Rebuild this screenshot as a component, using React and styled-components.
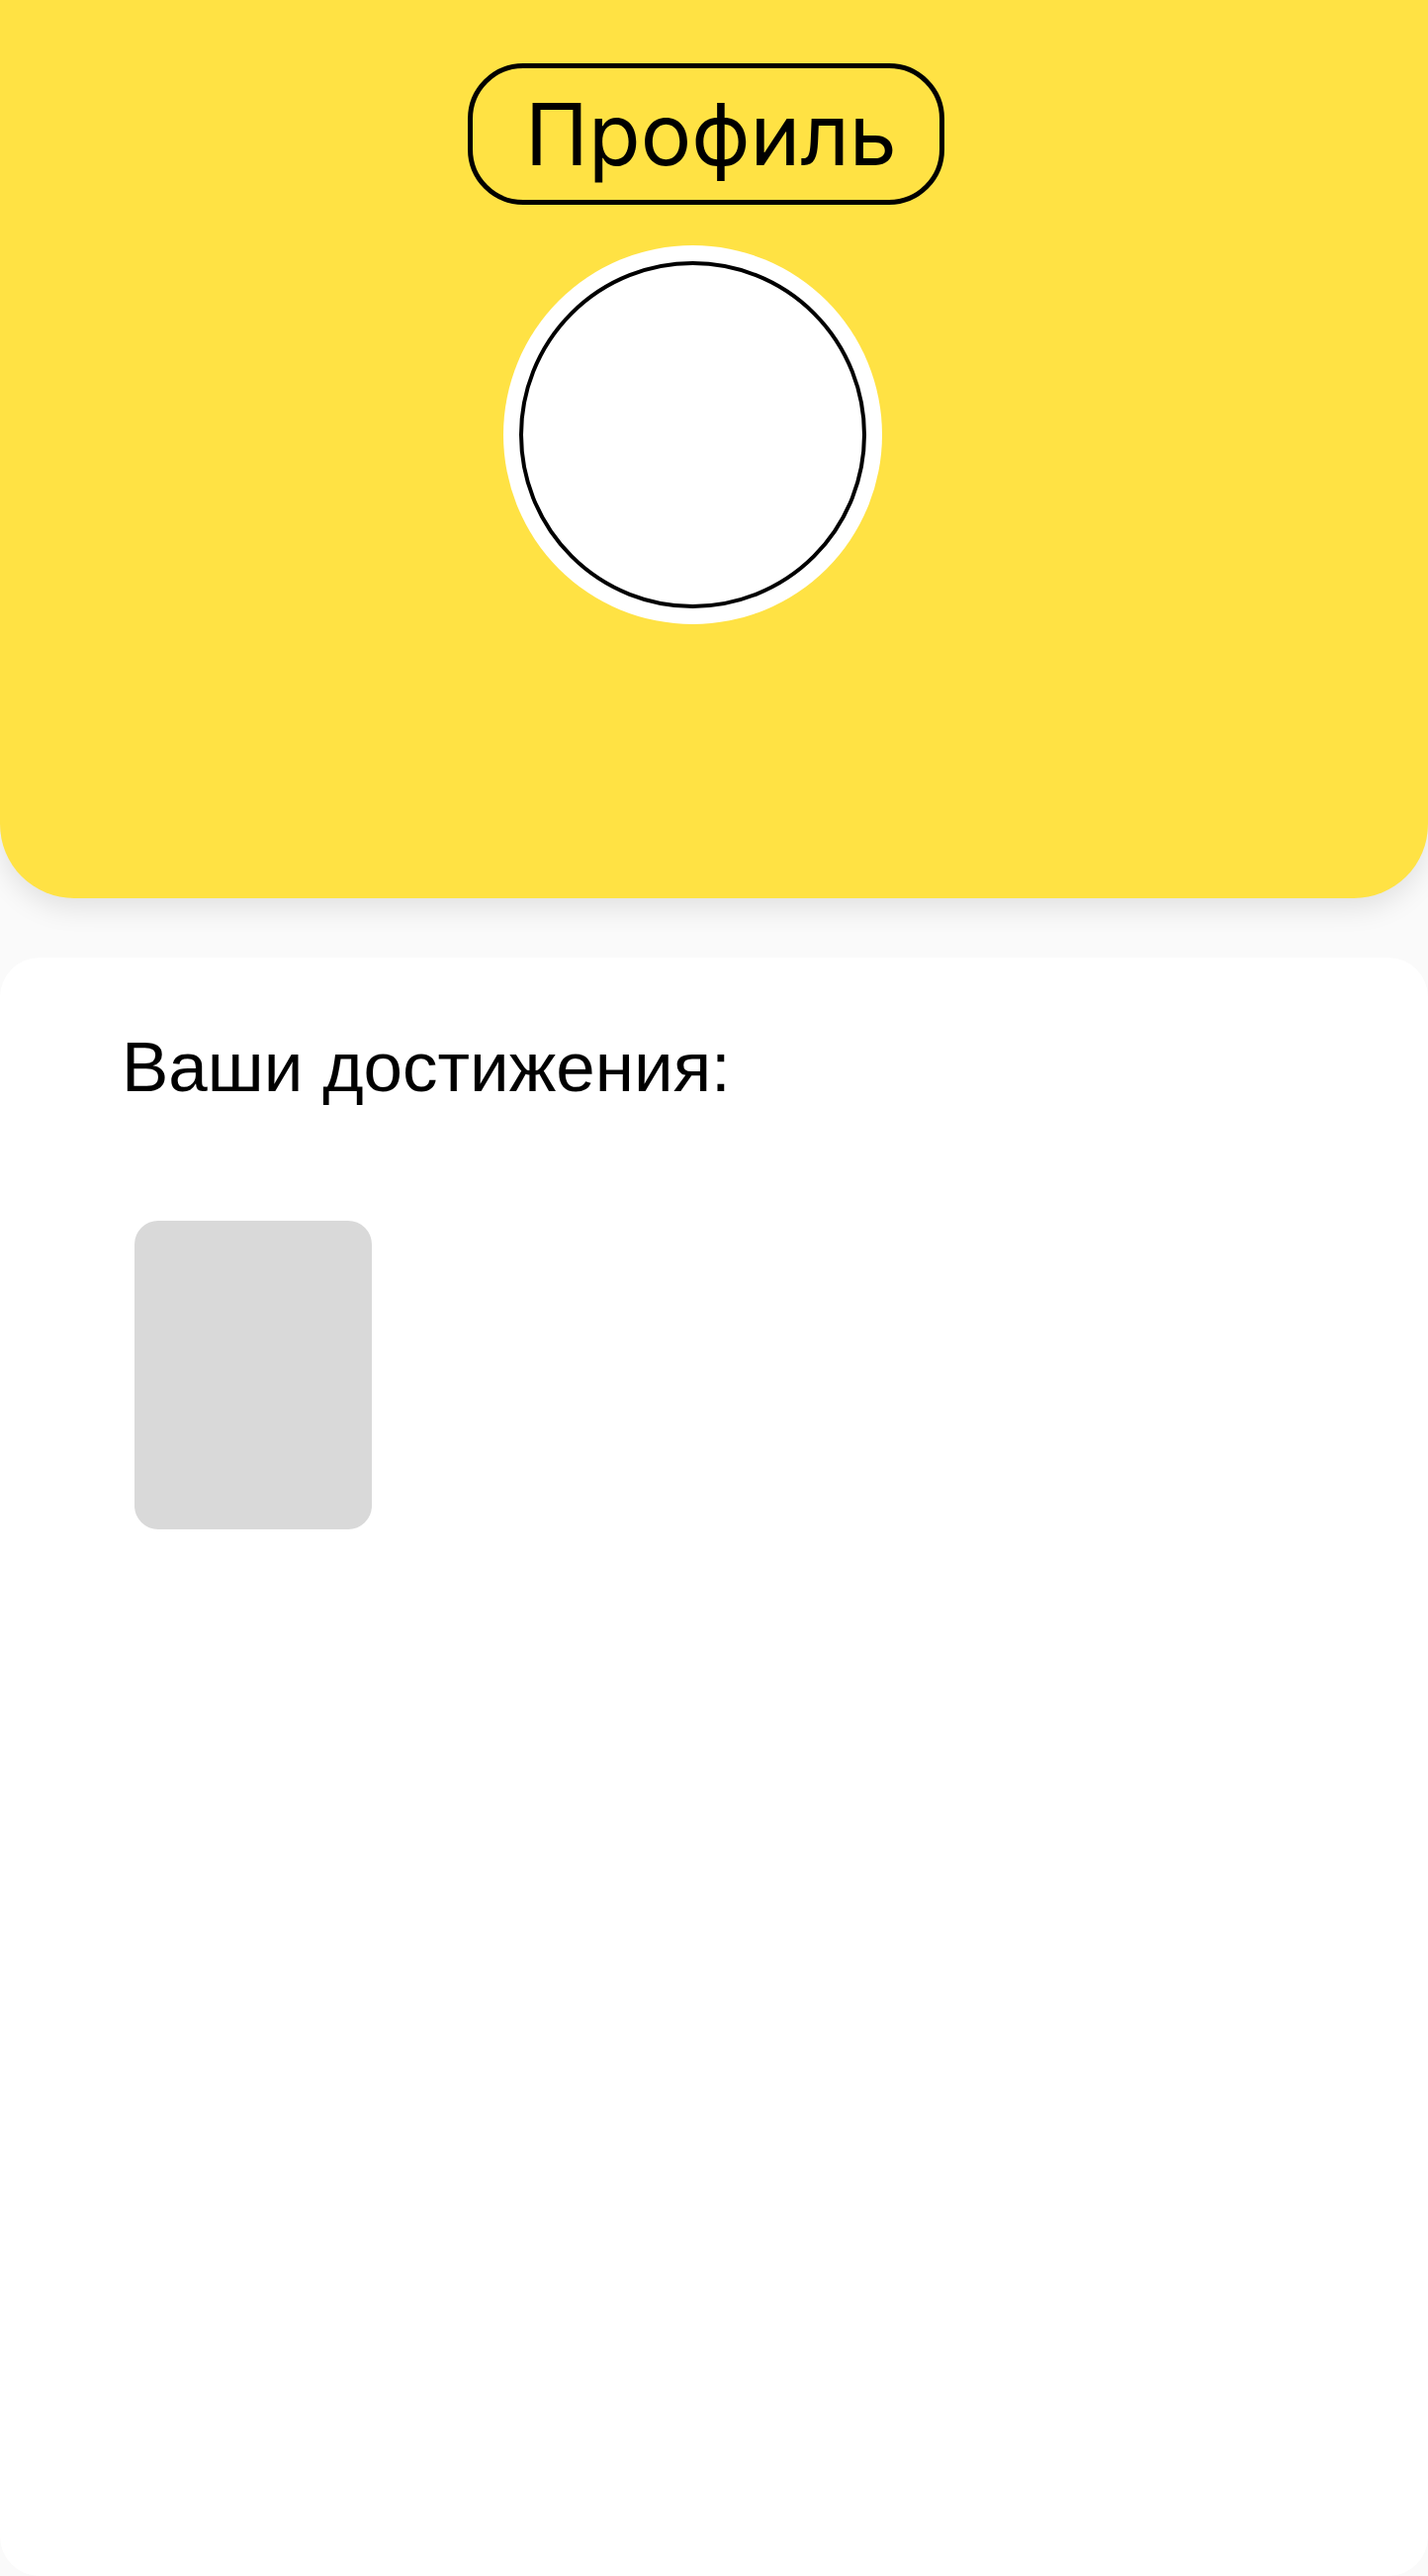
import React from 'react';
import styled, { createGlobalStyle } from 'styled-components';

// Global page reset
const GlobalStyle = createGlobalStyle`
  html, body {
    margin: 0;
    padding: 0;
    background: #fafafa;
  }
  #root {
    min-height: 2604px;
  }
`;

const Page = styled.div`
  min-height: 2604px;
  display: flex;
  flex-direction: column;
  background: #fafafa;
`;

// Yellow top block
const Header = styled.header`
  height: 908px;
  box-sizing: border-box;
  padding-top: 64px;
  display: flex;
  flex-direction: column;
  align-items: center;
  gap: 41px;
  background: #ffe244;
  border-radius: 0 0 75px 75px;
  box-shadow: 0 10px 28px rgba(0, 0, 0, 0.1);
  position: relative;
  z-index: 1;
`;

const TitlePill = styled.h1`
  margin: 0 ${props => props.shift}px 0 0;
  width: 482px;
  height: 143px;
  box-sizing: border-box;
  border: 5px solid #000;
  border-radius: 56px;
  display: flex;
  align-items: center;
  justify-content: center;
  padding: 0 34px 0 44px;
  font-family: Inter, "Noto Sans", sans-serif;
  font-weight: 400;
  font-size: 86px;
  line-height: 1;
  color: #000;
`;

const AvatarRing = styled.div`
  margin-right: ${props => props.shift}px;
  width: 383px;
  height: 383px;
  box-sizing: border-box;
  padding: 16px;
  border-radius: 50%;
  background: #fff;
`;

const Avatar = styled.div`
  width: 100%;
  height: 100%;
  box-sizing: border-box;
  border: 4px solid #000;
  border-radius: 50%;
  background: #fff;
`;

// White achievements block
const Card = styled.section`
  margin-top: 60px;
  flex: 1;
  background: #fff;
  border-radius: 40px;
  padding: 70px 0 0 123px;
  display: flex;
  flex-direction: column;
`;

const SectionTitle = styled.h2`
  margin: 0;
  font-family: "Liberation Sans", Arial, sans-serif;
  font-weight: 400;
  font-size: 71px;
  line-height: 1.15;
  color: #000;
`;

const Grid = styled.div`
  margin-top: 114px;
  padding-left: 13px;
  display: flex;
  flex-wrap: wrap;
  gap: 24px;
`;

const Badge = styled.div`
  width: 240px;
  height: 312px;
  border-radius: 24px;
  background: #d9d9d9;
`;

const achievements = [{ id: 1 }];

const App = () => (
  <Page>
    <GlobalStyle />
    <Header>
      <TitlePill shift={16}>Профиль</TitlePill>
      <AvatarRing shift={44}>
        <Avatar />
      </AvatarRing>
    </Header>
    <Card>
      <SectionTitle>Ваши достижения:</SectionTitle>
      <Grid>
        {achievements.map(a => (
          <Badge key={a.id} />
        ))}
      </Grid>
    </Card>
  </Page>
);

export default App;
